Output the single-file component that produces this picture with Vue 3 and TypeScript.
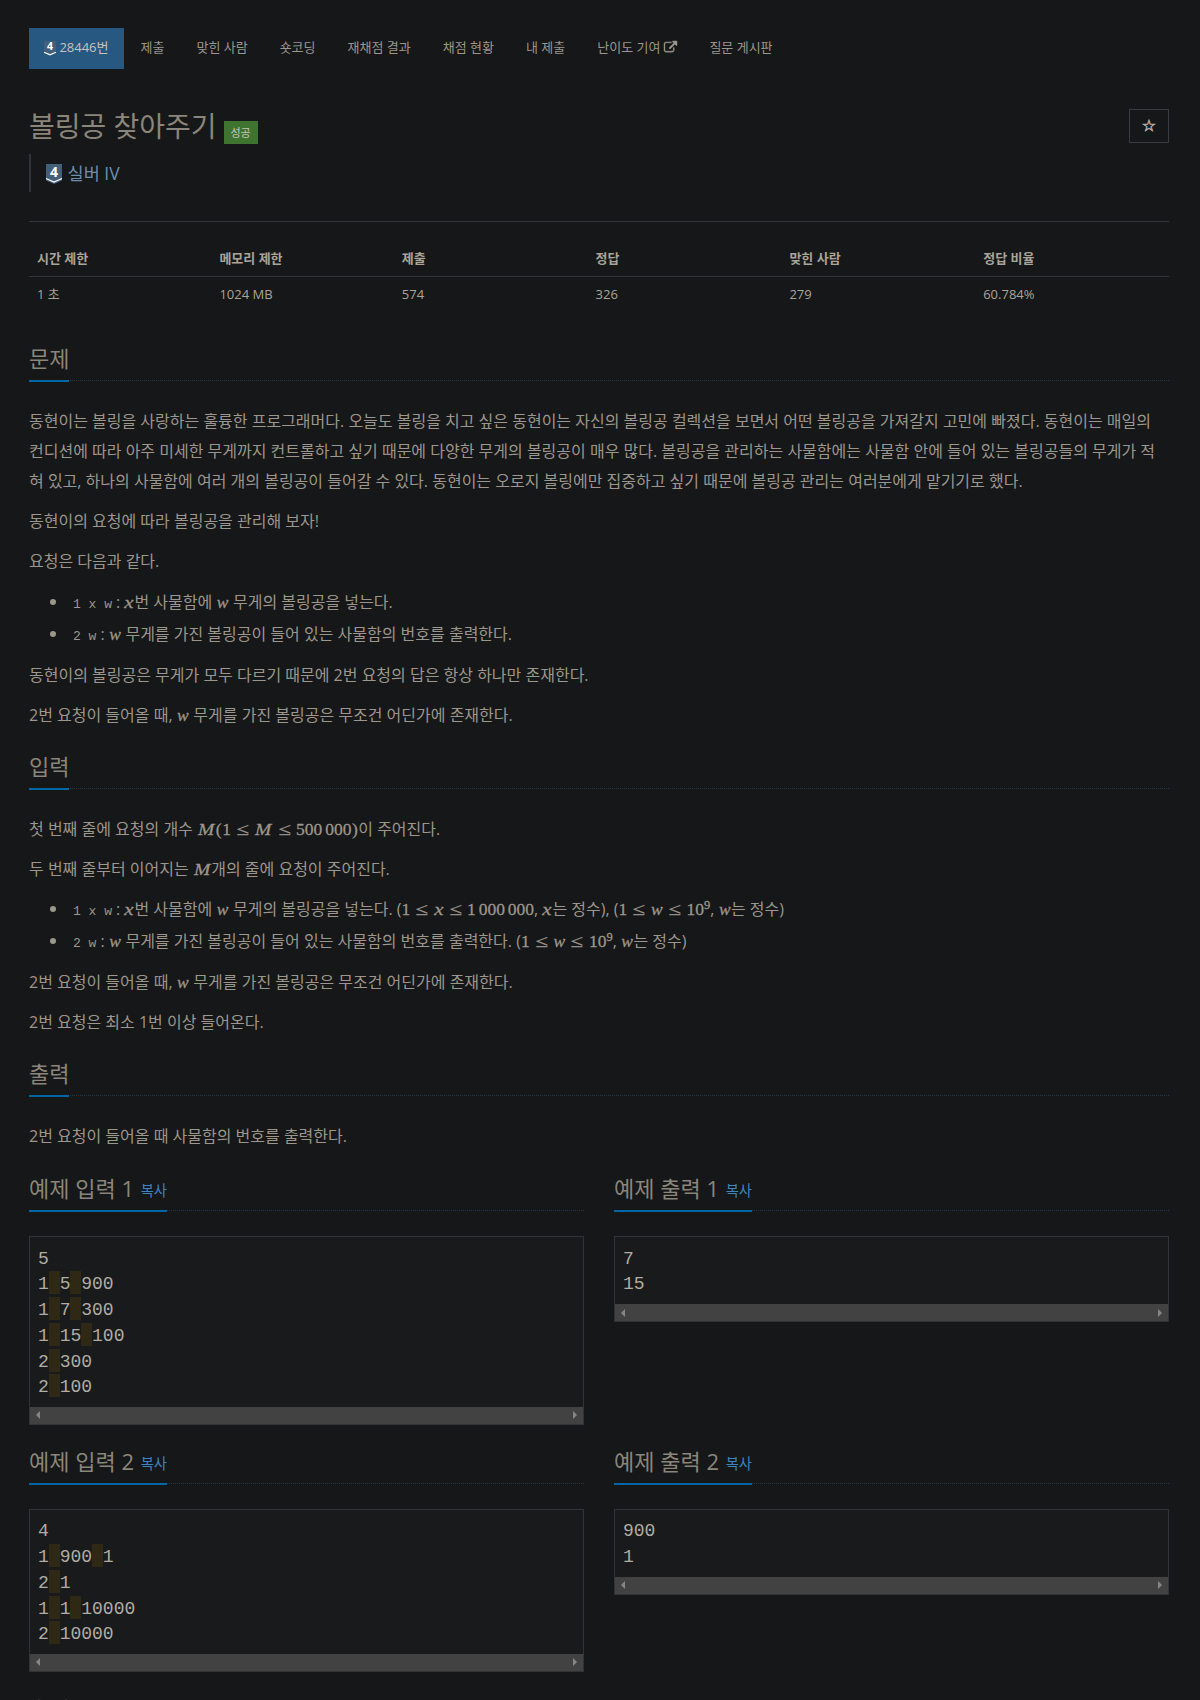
<script setup lang="ts">
interface Sample { id: number; input: string[]; output: string[] }

const menu: string[] = ['제출', '맞힌 사람', '숏코딩', '재채점 결과', '채점 현황', '내 제출', '난이도 기여', '질문 게시판']
const stats: [string, string, number][] = [
  ['시간 제한', '1 초', 16], ['메모리 제한', '1024 MB', 16], ['제출', '574', 17],
  ['정답', '326', 17], ['맞힌 사람', '279', 17], ['정답 비율', '60.784%', 17],
]
const samples: Sample[] = [
  { id: 1, input: ['5', '1 5 900', '1 7 300', '1 15 100', '2 300', '2 100'], output: ['7', '15'] },
  { id: 2, input: ['4', '1 900 1', '2 1', '1 1 10000', '2 10000'], output: ['900', '1'] },
]
const kinds: { key: 'input' | 'output'; label: string }[] = [
  { key: 'input', label: '예제 입력' }, { key: 'output', label: '예제 출력' },
]
const tokens = (line: string): string[] => line.split(/( )/)
</script>

<template>
  <main class="page">
    <nav class="menu">
      <a class="item active">
        <svg class="tier small" viewBox="0 0 16 20"><path d="M0 0h16v14.600L8 18 0 14.600z" fill="#435f7a" /><path d="M0 15l8 3.500 8-3.500" fill="none" stroke="#fff" stroke-width="1.800" /><text x="8" y="12.600">4</text></svg>
        28446번
      </a>
      <a v-for="m in menu" :key="m" class="item">{{ m }}<svg v-if="m === '난이도 기여'" class="ext" viewBox="0 0 1792 1792"><path fill="currentColor" stroke="currentColor" stroke-width="60" d="M1408 928v320q0 119-84.500 203.500t-203.500 84.500h-832q-119 0-203.500-84.500t-84.500-203.500v-832q0-119 84.500-203.500t203.500-84.500h704q14 0 23 9t9 23v64q0 14-9 23t-23 9h-704q-66 0-113 47t-47 113v832q0 66 47 113t113 47h832q66 0 113-47t47-113v-320q0-14 9-23t23-9h64q14 0 23 9t9 23zm384-864v512q0 26-19 45t-45 19-45-19l-176-176-652 652q-10 10-23 10t-23-10l-114-114q-10-10-10-23t10-23l652-652-176-176q-19-19-19-45t19-45 45-19h512q26 0 45 19t19 45z" /></svg></a>
    </nav>

    <header class="title-row">
      <h1>볼링공 찾아주기</h1><span class="label">성공</span>
      <button class="star">☆</button>
    </header>
    <blockquote class="tier-line">
      <svg class="tier" viewBox="0 0 16 20"><path d="M0 0h16v16.500L8 20 0 16.500z" fill="#435f7a" /><path d="M0 14.500l8 3.500 8-3.500" fill="none" stroke="#fff" stroke-width="1.300" /><text x="8" y="12.800">4</text></svg>
      실버 IV
    </blockquote>
    <hr>

    <table class="stats">
      <thead><tr><th v-for="s in stats" :key="s[0]" :style="{ width: s[2] + '%' }">{{ s[0] }}</th></tr></thead>
      <tbody><tr><td v-for="s in stats" :key="s[0]">{{ s[1] }}</td></tr></tbody>
    </table>

    <section>
      <div class="headline"><h2>문제</h2></div>
      <p>동현이는 볼링을 사랑하는 훌륭한 프로그래머다. 오늘도 볼링을 치고 싶은 동현이는 자신의 볼링공 컬렉션을 보면서 어떤 볼링공을 가져갈지 고민에 빠졌다. 동현이는 매일의 컨디션에 따라 아주 미세한 무게까지 컨트롤하고 싶기 때문에 다양한 무게의 볼링공이 매우 많다. 볼링공을 관리하는 사물함에는 사물함 안에 들어 있는 볼링공들의 무게가 적혀 있고, 하나의 사물함에 여러 개의 볼링공이 들어갈 수 있다. 동현이는 오로지 볼링에만 집중하고 싶기 때문에 볼링공 관리는 여러분에게 맡기기로 했다.</p>
      <p>동현이의 요청에 따라 볼링공을 관리해 보자!</p>
      <p>요청은 다음과 같다.</p>
      <ul>
        <li><code>1 x w</code>: <i class="m x">x</i>번 사물함에 <i class="m w">w</i> 무게의 볼링공을 넣는다.</li>
        <li><code>2 w</code>: <i class="m w">w</i> 무게를 가진 볼링공이 들어 있는 사물함의 번호를 출력한다.</li>
      </ul>
      <p>동현이의 볼링공은 무게가 모두 다르기 때문에 2번 요청의 답은 항상 하나만 존재한다.</p>
      <p>2번 요청이 들어올 때, <i class="m w">w</i> 무게를 가진 볼링공은 무조건 어딘가에 존재한다.</p>
    </section>

    <section class="spaced">
      <div class="headline"><h2>입력</h2></div>
      <p>첫 번째 줄에 요청의 개수 <i class="m cap">M</i><b class="m par">(</b><b class="m">1</b><b class="m le">≤</b><i class="m cap">M</i><b class="m le">≤</b><b class="m">500</b><b class="m thin">000</b><b class="m par">)</b>이 주어진다.</p>
      <p>두 번째 줄부터 이어지는 <i class="m cap">M</i>개의 줄에 요청이 주어진다.</p>
      <ul class="ranges">
        <li><code>1 x w</code>: <i class="m x">x</i>번 사물함에 <i class="m w">w</i> 무게의 볼링공을 넣는다. (<b class="m">1</b><b class="m le">≤</b><i class="m x">x</i><b class="m le">≤</b><b class="m">1</b><b class="m thin">000</b><b class="m thin">000</b>, <i class="m x">x</i>는 정수), (<b class="m">1</b><b class="m le">≤</b><i class="m w">w</i><b class="m le">≤</b><b class="m">10</b><b class="m sup">9</b>, <i class="m w">w</i>는 정수)</li>
        <li><code>2 w</code>: <i class="m w">w</i> 무게를 가진 볼링공이 들어 있는 사물함의 번호를 출력한다. (<b class="m">1</b><b class="m le">≤</b><i class="m w">w</i><b class="m le">≤</b><b class="m">10</b><b class="m sup">9</b>, <i class="m w">w</i>는 정수)</li>
      </ul>
      <p>2번 요청이 들어올 때, <i class="m w">w</i> 무게를 가진 볼링공은 무조건 어딘가에 존재한다.</p>
      <p>2번 요청은 최소 1번 이상 들어온다.</p>
    </section>

    <section class="spaced output">
      <div class="headline"><h2>출력</h2></div>
      <p>2번 요청이 들어올 때 사물함의 번호를 출력한다.</p>
    </section>

    <div v-for="s in samples" :key="s.id" class="samples">
      <section v-for="k in kinds" :key="k.key">
        <div class="headline"><h2>{{ k.label }} {{ s.id }} <a class="copy">복사</a></h2></div>
        <div class="box">
          <pre><div v-for="(line, i) in s[k.key]" :key="i"><span v-for="(t, j) in tokens(line)" :key="j" :class="{ space: t === ' ' }">{{ t }}</span></div></pre>
          <div class="scroll"><svg viewBox="0 0 4 8"><path d="M4 0v8L0 4z" /></svg><svg viewBox="0 0 4 8"><path d="M0 0v8l4-4z" /></svg></div>
        </div>
      </section>
    </div>
    <section class="source"><div class="headline"><h2>출처</h2></div></section>
  </main>
</template>

<style>
body { background: #151718; overflow: hidden; }
</style>
<style scoped>
* { box-sizing: border-box; }
.page { height: 1700px; overflow: hidden; padding: 28px 31px 0 29px; background: #151718; color: #9d968c; font: 13px/20.8px "Open Sans", "Noto Sans CJK KR", sans-serif; }
.menu { display: flex; height: 41px; gap: 2px; }
.item { padding: 9px 15px 0; white-space: nowrap; }
.active { background: #265882; color: #c8c3bc; }
.tier { width: 16px; height: 20px; vertical-align: -4px; overflow: visible; margin-right: 1px; }
.tier.small { width: 12px; height: 15px; vertical-align: -4px; margin-right: 0; }
.tier text { font: bold 14px/20px "Open Sans", sans-serif; fill: #fff; text-anchor: middle; }
.ext { width: 13px; height: 13px; margin-left: 4px; vertical-align: -2px; overflow: visible; }
.title-row { display: flex; margin-top: 40px; height: 45px; align-items: flex-start; }
h1 { margin: 0; font-size: 28px; line-height: 35px; font-weight: 400; color: #8c857a; }
.label { margin: 12px 0 0 7px; width: 34px; height: 23px; background: #3f7330; color: #c8c3bc; font-size: 11px; line-height: 23px; text-align: center; }
.star { margin: 0 0 0 auto; width: 40px; height: 34px; padding: 0; background: none; border: 1px solid #373c3e; color: #b2aca2; font: 16px/30px "DejaVu Sans", sans-serif; -webkit-text-stroke: .6px; }
.tier-line { margin: 0; height: 38px; border-left: 2px solid #303436; padding: 0 15px; font-size: 17.500px; line-height: 38px; color: #6d8eb0; }
hr { margin: 29px 0 19px; border: 0; border-top: 1px solid #303436; }
.stats { width: 100%; table-layout: fixed; border-collapse: collapse; color: #aaa499; }
th, td { padding: 8px; text-align: left; height: 35px; line-height: 18.600px; }
th { border-bottom: 1px solid #303436; }
.headline { margin: 0 0 25px; border-bottom: 1px dotted #26364a; display: flex; height: 39px; }
.stats + section { margin-top: 31px; }
.spaced { margin-top: 20px; }
.output { margin-bottom: 21px; }
h2 { margin: 0; font-size: 22px; line-height: 33px; height: 40px; font-weight: 400; color: #8c857a; border-bottom: 2px solid #0067a6; white-space: pre; }
p { margin: 0 0 10px; font-size: 16px; line-height: 30px; }
ul { margin: 0 0 10px; padding: 0 0 0 40px; font-size: 16px; line-height: 30px; }
.ranges { margin-top: 9px; }
p:has(+ .ranges) { margin-bottom: 9px; }
li { height: 32px; }
li::marker { font-size: 18px; }
code { font: 13px/10px "Liberation Mono", monospace; padding: 2px 4px; }
.m { display: inline-block; font: 400 17.500px/10px "Liberation Serif", serif; text-align: center; white-space: nowrap; -webkit-text-stroke: .3px; }
i.m { font-style: italic; }
.x { width: 10px; transform: scaleX(1.200); }
.w { width: 12.500px; }
.cap { width: 18.400px; transform: scaleX(1.120); }
.par { width: 6.800px; }
.le { width: 13.600px; margin: 0 4.900px; transform: scaleX(1.300); }
.thin { margin-left: 2.900px; }
.sup { font-size: 12.500px; position: relative; top: -6px; margin-left: 0; }
.samples { display: grid; grid-template-columns: 1fr 1fr; gap: 30px; }
.copy { color: #3d85c0; font-size: 14.300px; line-height: 14px; margin-left: 1px; vertical-align: 1px; }
.box { border: 1px solid #303436; background: #181a1b; margin-bottom: 20px; }
pre { margin: 0; padding: 9.500px 8px 6px; font: 18px/25.700px "Liberation Mono", monospace; color: #b2aca2; }
.space { padding-top: 3px; background: #2e2814; }
.scroll { height: 17px; background: #424242; display: flex; justify-content: space-between; align-items: center; padding: 0 6px; }
.scroll svg { width: 4px; height: 8px; fill: #868686; }
.source { padding-top: 1px; }
</style>
